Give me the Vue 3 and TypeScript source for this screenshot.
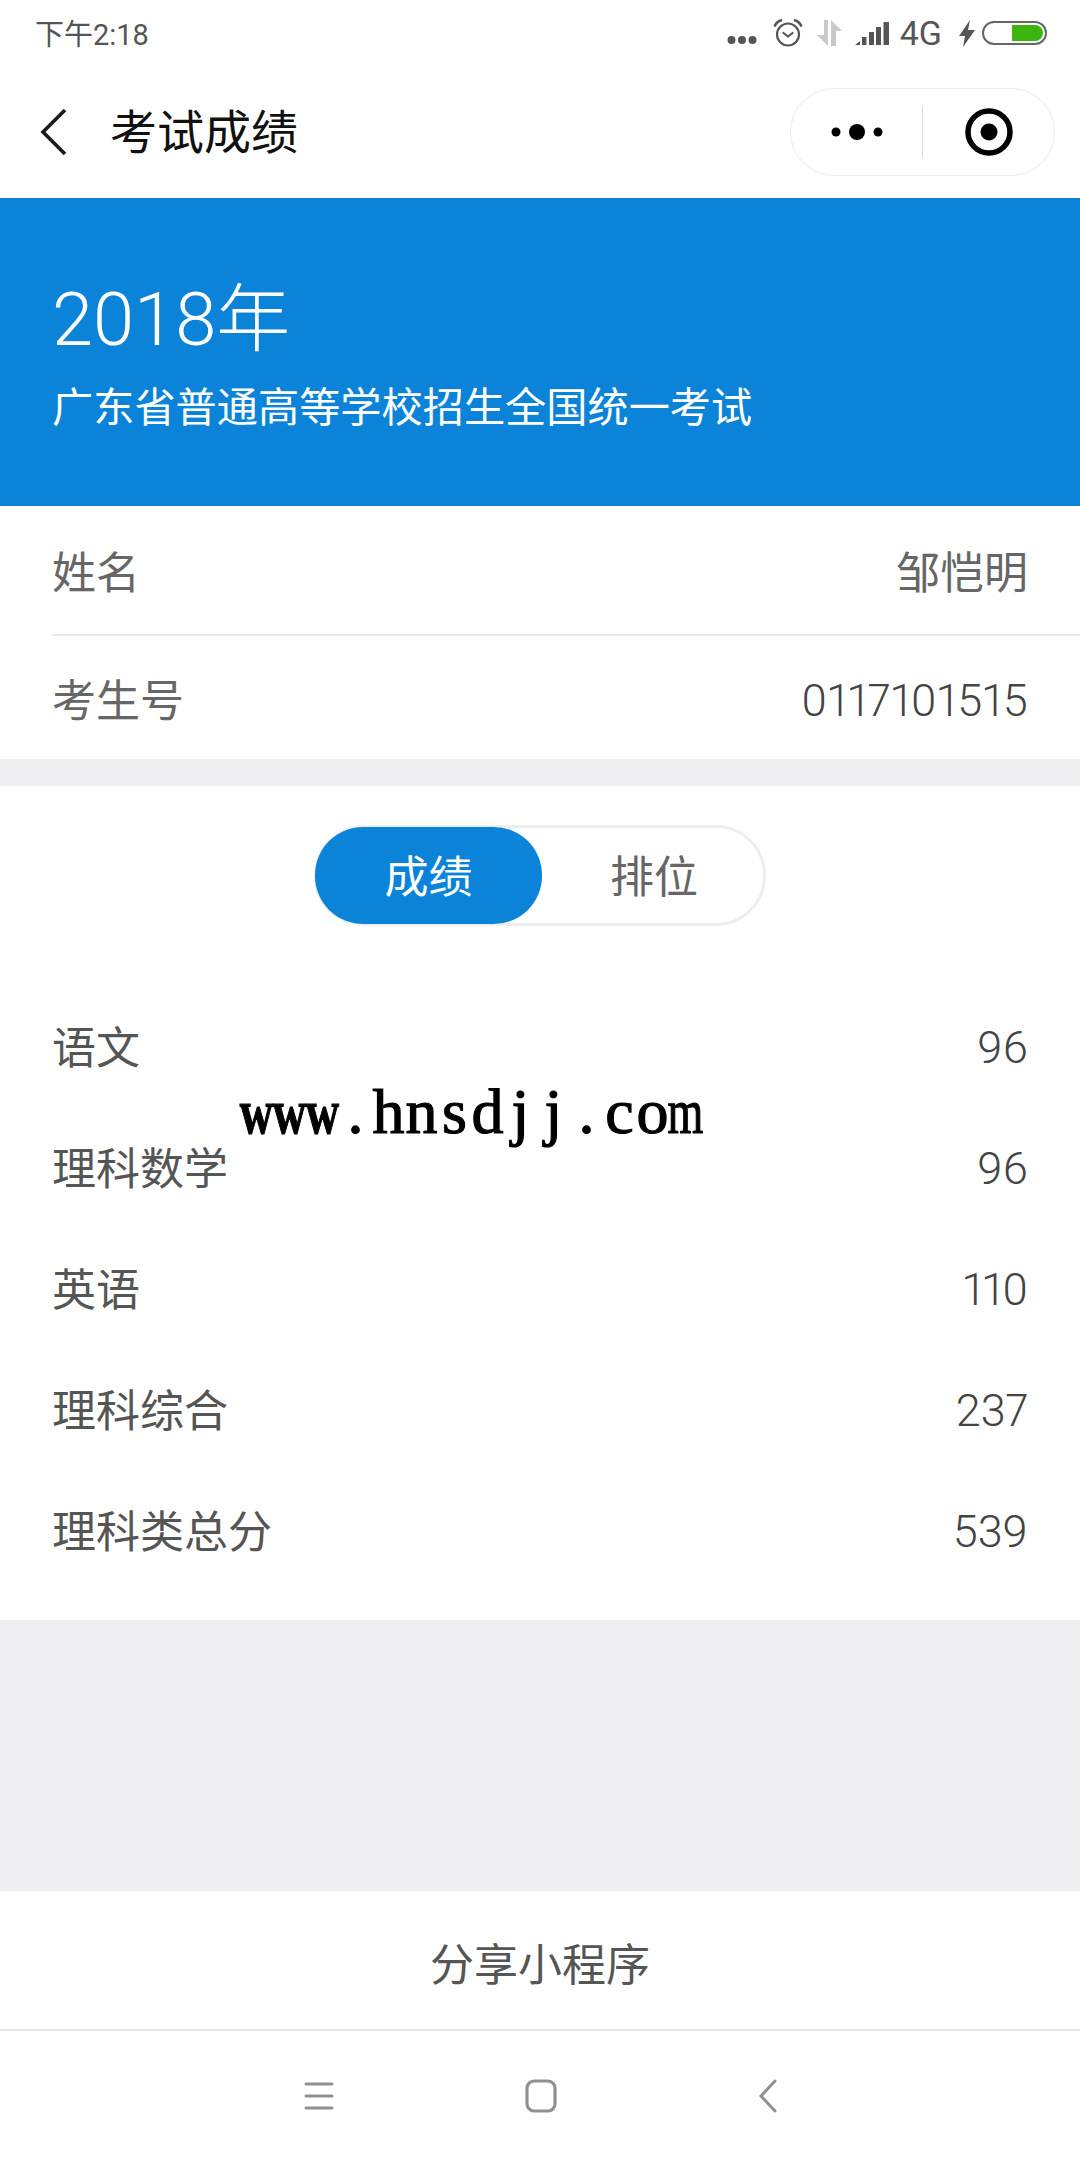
<template>
  <div class="page">
    <div class="status-bar">
      <span class="time">下午2:18</span>
      <div class="status-icons">
        <svg class="dots" width="30" height="10" viewBox="0 0 30 10"><circle cx="4.500" cy="5" r="4" /><circle cx="15" cy="5" r="4" /><circle cx="25.500" cy="5" r="4" /></svg>
        <svg class="alarm" width="30" height="30" viewBox="0 0 30 30" fill="none" stroke="#555" stroke-width="2.200">
          <circle cx="15" cy="16.500" r="11" />
          <path d="M10.500 15l4.500 3.500 4.500-3.500" stroke-linecap="round" stroke-linejoin="round" />
          <path d="M1.500 8.500C3 5 5.500 2.800 9 2M28.500 8.500C27 5 24.500 2.800 21 2" stroke-width="2.800" />
        </svg>
        <svg class="data" width="25" height="26" viewBox="0 0 25 26" fill="#c9c9c9"><path d="M7 0h4v26L0 15h7zM14 0l11 11h-6v15h-5z" /></svg>
        <svg class="signal" width="34" height="23" viewBox="0 0 34 23" fill="#555"><path d="M0 23l5-4v4zM7 15h4.500v8H7zM14 10h5v13h-5zM21 5h5v18h-5zM28.500 0h5.500v23h-5.500z" /></svg>
        <span class="net">4G</span>
        <svg class="bolt" width="16" height="27" viewBox="0 0 16 27" fill="#555"><path d="M11 0L0 16h6L4 27 16 10H9z" /></svg>
        <div class="battery"><div class="battery-fill"></div></div>
      </div>
    </div>

    <header class="nav">
      <svg class="back" width="30" height="48" viewBox="0 0 30 48" fill="none" stroke="#1a1a1a" stroke-width="3.600">
        <path d="M26 2L4 24l22 22" />
      </svg>
      <h1 class="nav-title">考试成绩</h1>
      <div class="capsule">
        <div class="capsule-cell">
          <svg width="52" height="18" viewBox="0 0 52 18" fill="#000"><circle cx="5" cy="9" r="4.500" /><circle cx="26" cy="9" r="8" /><circle cx="47" cy="9" r="4.500" /></svg>
        </div>
        <div class="capsule-line"></div>
        <div class="capsule-cell">
          <svg width="48" height="48" viewBox="0 0 48 48"><circle cx="24" cy="24" r="21" fill="none" stroke="#000" stroke-width="5.500" /><circle cx="24" cy="24" r="8.500" fill="#000" /></svg>
        </div>
      </div>
    </header>

    <section class="banner">
      <div class="year">2018年</div>
      <div class="exam-name">广东省普通高等学校招生全国统一考试</div>
    </section>

    <section class="info">
      <div class="info-row">
        <span>姓名</span>
        <span>邹恺明</span>
      </div>
      <div class="info-row">
        <span>考生号</span>
        <span class="num num--long">0117101515</span>
      </div>
    </section>

    <section class="scores">
      <div class="tabs">
        <button class="tab tab--active">成绩</button>
        <button class="tab">排位</button>
      </div>
      <div class="score-list">
        <div v-for="row in scoreRows" :key="row.label" class="score-row">
          <span>{{ row.label }}</span>
          <span class="num">{{ row.value }}</span>
        </div>
      </div>
    </section>

    <div class="spacer"></div>
    <div class="share">分享小程序</div>

    <footer class="system-nav">
      <svg width="30" height="30" viewBox="0 0 30 30" fill="none" stroke="#909090" stroke-width="3" stroke-linecap="round">
        <path d="M2 3h26M2 15h26M2 27h26" />
      </svg>
      <svg width="32" height="34" viewBox="0 0 32 34" fill="none" stroke="#909090" stroke-width="3.200">
        <rect x="2" y="2" width="28" height="30" rx="7" />
      </svg>
      <svg width="18" height="34" viewBox="0 0 18 34" fill="none" stroke="#909090" stroke-width="3" stroke-linecap="round">
        <path d="M16 2L2 17l14 15" />
      </svg>
    </footer>

    <div class="watermark">
      <span
        v-for="(ch, i) in watermark"
        :key="i"
        class="mark-char"
        :class="{ 'mark-char--bold': i < 3, 'mark-char--wide': ch === 'w' || ch === 'm' }"
      >{{ ch }}</span>
    </div>
  </div>
</template>

<script setup lang="ts">
const scoreRows = [
  { label: '语文', value: '96' },
  { label: '理科数学', value: '96' },
  { label: '英语', value: '110' },
  { label: '理科综合', value: '237' },
  { label: '理科类总分', value: '539' }
]

const watermark = 'www.hnsdjj.com'.split('')
</script>

<style>
body {
  margin: 0;
  background: #fff;
}
</style>

<style scoped>
.page {
  position: relative;
  width: 1080px;
  height: 2160px;
  display: flex;
  flex-direction: column;
  overflow: hidden;
  background: #fff;
  color: #555;
  font-family: Roboto, "Noto Sans CJK SC", sans-serif;
}

.status-bar {
  height: 66px;
  flex: none;
  display: flex;
  align-items: center;
  justify-content: space-between;
  padding: 0 33px 0 35px;
}

.time {
  margin-top: -2px;
  font-size: 29px;
  color: #555;
}

.status-icons {
  display: flex;
  align-items: center;
}

.dots {
  fill: #555;
  margin-top: 14px;
}

.alarm {
  margin-left: 16px;
}

.data {
  margin-left: 14px;
}

.signal {
  margin-left: 13px;
}

.net {
  margin-left: 11px;
  font-size: 34px;
  color: #555;
}

.bolt {
  margin-left: 17px;
}

.battery {
  box-sizing: border-box;
  width: 65px;
  height: 24px;
  margin-left: 7px;
  padding: 2px;
  display: flex;
  justify-content: flex-end;
  border: 2px solid #666;
  border-radius: 12px;
}

.battery-fill {
  width: 31px;
  background: #3cb50f;
  border-radius: 0 9px 9px 0;
}

.nav {
  height: 132px;
  flex: none;
  display: flex;
  align-items: center;
  padding: 0 25px 0 39px;
}

.back {
  flex: none;
}

.nav-title {
  flex: 1;
  margin: 0 0 0 41px;
  font-size: 47px;
  font-weight: 400;
  line-height: 1;
  color: #111;
}

.capsule {
  box-sizing: border-box;
  width: 265px;
  height: 88px;
  display: flex;
  align-items: center;
  border: 1px solid #ececec;
  border-radius: 44px;
}

.capsule-cell {
  flex: 1;
  display: flex;
  align-items: center;
  justify-content: center;
}

.capsule-line {
  width: 1px;
  height: 52px;
  background: #dcdcdc;
}

.banner {
  height: 308px;
  flex: none;
  box-sizing: border-box;
  padding: 80px 52px 0;
  background: #0a83d8;
  color: #fff;
}

.year {
  font-size: 74px;
  line-height: 84px;
  font-weight: 300;
}

.exam-name {
  margin-top: 21px;
  font-size: 41.2px;
  line-height: 50px;
}

.info {
  flex: none;
  padding-left: 52px;
  border-bottom: 27px solid #eeeef1;
}

.info-row {
  height: 123px;
  display: flex;
  align-items: center;
  justify-content: space-between;
  padding-right: 52px;
  font-size: 44px;
  color: #666;
}

.info-row:first-child {
  height: 128px;
  border-bottom: 2px solid #e8e8e8;
}

.num {
  padding-top: 6px;
  font-size: 45px;
  font-weight: 300;
  font-variant-numeric: proportional-nums;
  color: #444;
}

.num--long {
  letter-spacing: 0.4px;
}

.scores {
  height: 834px;
  flex: none;
  box-sizing: border-box;
  padding-top: 39px;
}

.tabs {
  box-sizing: border-box;
  width: 452px;
  height: 101px;
  margin: 0 auto;
  display: flex;
  align-items: center;
  border: 3px solid #eceeef;
  border-radius: 50px;
}

.tab {
  flex: none;
  width: 224px;
  height: 97px;
  padding: 0 0 4px;
  border: 0;
  border-radius: 48px;
  background: transparent;
  font-family: inherit;
  font-size: 44px;
  color: #666;
}

.tab--active {
  width: 227px;
  margin-left: -2px;
  background: #0a83d8;
  color: #fff;
}

.score-list {
  margin-top: 58px;
  padding: 0 52px;
}

.score-row {
  height: 121px;
  display: flex;
  align-items: center;
  justify-content: space-between;
  font-size: 44px;
  color: #555;
}

.spacer {
  height: 271px;
  flex: none;
  background: #eeeef1;
}

.share {
  height: 140px;
  box-sizing: border-box;
  padding-top: 3px;
  flex: none;
  display: flex;
  align-items: center;
  justify-content: center;
  border-bottom: 2px solid #e8e8e8;
  font-size: 44px;
  color: #555;
}

.system-nav {
  flex: 1;
  display: flex;
  align-items: center;
  justify-content: center;
}

.system-nav svg:nth-child(1) {
  margin-right: 191px;
}

.system-nav svg:nth-child(3) {
  margin-left: 202px;
}

/* stamped over the page; every letter sits in a half-width cell */
.watermark {
  position: absolute;
  left: 240px;
  top: 1076px;
  display: flex;
  font-family: "Liberation Serif", serif;
  font-size: 64px;
  line-height: 72px;
  color: #000;
  -webkit-text-stroke: 1.2px #000;
}

.mark-char {
  flex: none;
  width: 33px;
  display: flex;
  justify-content: center;
}

.mark-char--bold {
  font-weight: 700;
}

.mark-char--wide {
  transform: scaleX(0.72);
}
</style>
